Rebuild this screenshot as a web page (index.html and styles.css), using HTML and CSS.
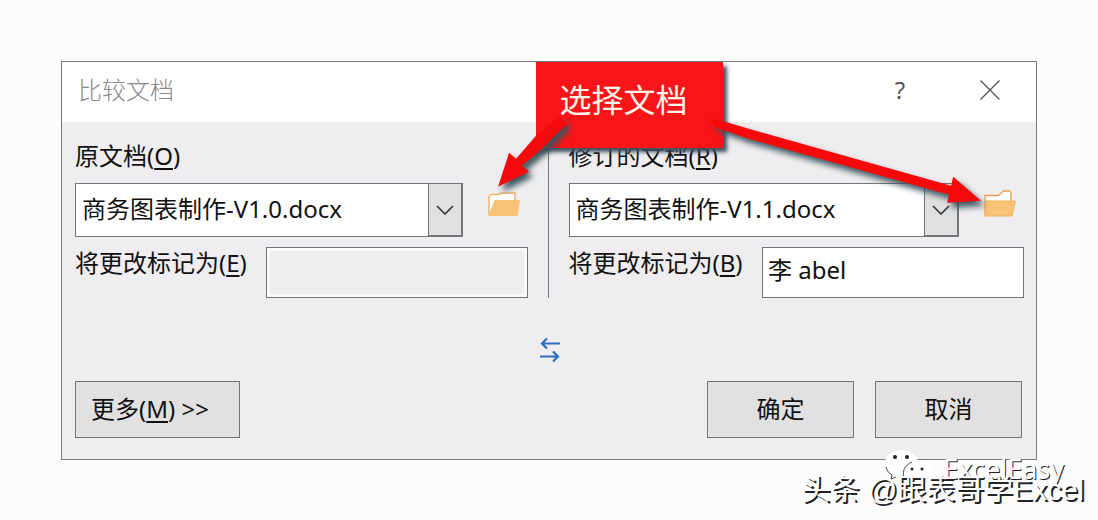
FILE: index.html
```
<!DOCTYPE html>
<html lang="zh-CN">
<head>
    <meta charset="UTF-8">
    <meta name="viewport" content="width=device-width, initial-scale=1.0">
    <title>比较文档</title>
    <link rel="stylesheet" href="styles.css">
</head>
<body>
    <div class="dialog" role="dialog" aria-labelledby="dialog-title">
        <div class="title-bar">
            <h1 class="title" id="dialog-title">比较文档</h1>
            <button type="button" class="title-btn help">?</button>
            <button type="button" class="title-btn" aria-label="关闭">
                <svg width="20" height="20" viewBox="0 0 20 20" fill="none" stroke="#555" stroke-width="1.3">
                    <path d="M0.5 0.5L19.5 19.5M19.5 0.5L0.5 19.5"/>
                </svg>
            </button>
        </div>

        <form class="content">
            <div class="documents">
                <div class="document">
                    <label class="doc-label" for="original">原文档(<u>O</u>)</label>
                    <div class="doc-row">
                        <div class="combo">
                            <select id="original">
                                <option>商务图表制作-V1.0.docx</option>
                            </select>
                            <span class="combo-arrow">
                                <svg width="18" height="10" viewBox="0 0 18 10" fill="none" stroke="#333" stroke-width="1.6">
                                    <path d="M1 1L9 9L17 1"/>
                                </svg>
                            </span>
                        </div>
                        <button type="button" class="folder" aria-label="浏览原文档">
                            <svg width="32" height="28" viewBox="0 0 32 28">
                                <path d="M1 25V6.5L3 4.5H11L13.5 3H27V12" fill="#fff" stroke="#eeb565" stroke-width="1.5"/>
                                <path d="M6.5 10H32L29.5 26H0.5Z" fill="#f8c377"/>
                            </svg>
                        </button>
                    </div>
                    <div class="mark-row">
                        <label for="mark-original">将更改标记为(<u>E</u>)</label>
                        <input type="text" id="mark-original" disabled>
                    </div>
                </div>

                <div class="divider"></div>

                <div class="document">
                    <label class="doc-label" for="revised">修订的文档(<u>R</u>)</label>
                    <div class="doc-row">
                        <div class="combo">
                            <select id="revised">
                                <option>商务图表制作-V1.1.docx</option>
                            </select>
                            <span class="combo-arrow">
                                <svg width="18" height="10" viewBox="0 0 18 10" fill="none" stroke="#333" stroke-width="1.6">
                                    <path d="M1 1L9 9L17 1"/>
                                </svg>
                            </span>
                        </div>
                        <button type="button" class="folder" aria-label="浏览修订的文档">
                            <svg width="32" height="28" viewBox="0 0 32 28">
                                <path d="M1 25V5.5H14.5L19.5 1H25L27 2.5V12" fill="#fff" stroke="#eba050" stroke-width="1.3"/>
                                <path d="M1 11H31.5L28 26H1Z" fill="#f8c377" stroke="#eeb565"/>
                            </svg>
                        </button>
                    </div>
                    <div class="mark-row">
                        <label for="mark-revised">将更改标记为(<u>B</u>)</label>
                        <input type="text" id="mark-revised" value="李 abel">
                    </div>
                </div>
            </div>

            <button type="button" class="swap" aria-label="交换">
                <svg width="20" height="26" viewBox="0 0 20 26" fill="none" stroke="#2b6fc0" stroke-width="2.2">
                    <path d="M20 6.5H2M7 1.5L2 6.5L7 11.5"/>
                    <path d="M0 19.5H18M13 14.5L18 19.5L13 24.5"/>
                </svg>
            </button>

            <div class="actions">
                <button type="button" class="btn more">更多(<u>M</u>) &gt;&gt;</button>
                <button type="submit" class="btn">确定</button>
                <button type="button" class="btn">取消</button>
            </div>
        </form>

        <!-- red note and its two arrows -->
        <div class="callout">选择文档</div>
        <svg class="arrows" viewBox="0 0 976 398" fill="#f5090a">
            <path d="M498 55L506 62L480 88L461 104L468 110L437 125L448 91L455 97L475 74Z"/>
            <path d="M649 57L662 59L688 67L891 124L893 115L921 139L887 141L889 133L688 77L656 66Z"/>
        </svg>
    </div>

    <div class="watermark">
        <div class="account">
            <svg width="50" height="36" viewBox="0 0 50 36">
                <path d="M16 0C7 0 0 6 0 13C0 18 3 22 7 24L5 30L12 26L19 27C18 17 25 11 33 11C31 4 25 0 16 0Z" fill="#fff"/>
                <path d="M33 12C25 12 19 17 19 23C19 30 25 34 33 34L38 33L44 36L43 31C46 29 48 26 48 23C48 17 42 12 33 12Z" fill="#fff"/>
                <path d="M1 17C2 21 4 23 7 25L6 29L11 27M19 27C17 21 20 15 27 12" fill="none" stroke="#444"/>
                <g fill="#222">
                    <circle cx="10" cy="7" r="2"/>
                    <circle cx="22" cy="7" r="2"/>
                    <circle cx="27" cy="19" r="1.5"/>
                    <circle cx="37" cy="19" r="1.5"/>
                </g>
            </svg>
            <span>ExcelEasy</span>
        </div>
        <div class="source">头条 @跟表哥学Excel</div>
    </div>
</body>
</html>
```
FILE: styles.css
```
*{
    box-sizing: border-box;
}
body{
    margin: 0;
    padding: 61px;
    background: #fdfcfd;
    color: #111;
    font-family: "Noto Sans", "Noto Sans CJK SC", sans-serif;
    font-size: 24px;
    line-height: 32px;
}
button, input, select{
    font: inherit;
    color: inherit;
    border-radius: 0;
}
u{
    text-underline-offset: 3px;
    text-decoration-thickness: 2px;
}
.dialog{
    position: relative;
    border: 1px solid #777b80;
    background: #efedef;
}

/* title bar */
.title-bar{
    display: flex;
    align-items: center;
    height: 60px;
    padding: 0 16px 4px;
    background: #fff;
}
.title{
    flex: 1;
    margin: 0;
    font-size: 24px;
    font-weight: 300;
    color: #888;
}
.title-btn{
    display: flex;
    align-items: center;
    justify-content: center;
    width: 60px;
    height: 40px;
    padding: 0;
    border: none;
    background: none;
    color: #555;
}
.help{
    margin-right: 30px;
}

/* form */
.content{
    padding: 18px 12px 21px 13px;
}
.documents{
    display: grid;
    grid-template-columns: 453fr 1px 456fr;
    column-gap: 20px;
}
.divider{
    background: #70757a;
}
.doc-label{
    display: block;
    margin-bottom: 11px;
}
.doc-row{
    display: flex;
    align-items: center;
    gap: 25px;
    padding-right: 8px;
}
.combo{
    position: relative;
    flex: 1;
}
.combo select{
    display: block;
    width: 100%;
    height: 54px;
    padding: 0 40px 2px 6px;
    appearance: none;
    border: 1px solid #70757a;
    background: #fff;
}
.combo-arrow{
    position: absolute;
    top: 0;
    right: 0;
    bottom: 0;
    width: 35px;
    display: flex;
    align-items: center;
    justify-content: center;
    border: 1px solid #70757a;
    border-width: 1px 2px 2px 1px;
    background: #e1e0e1;
    pointer-events: none;
}
.folder, .swap{
    display: block;
    padding: 0;
    border: none;
    background: none;
}
.folder svg, .swap svg{
    display: block;
}
.folder{
    padding-bottom: 12px;
}
.mark-row{
    display: flex;
    justify-content: space-between;
    margin-top: 10px;
}
.mark-row input{
    width: 262px;
    height: 51px;
    padding: 0 5px 8px;
    border: 1px solid #70757a;
    background: #fff;
}
.mark-row input:disabled{
    background: #efedef;
    box-shadow: inset 0 0 0 3px #fbfafb;
}
.swap{
    margin: 39px auto 18px;
}
.actions{
    display: flex;
    gap: 21px;
    padding-right: 2px;
}
.btn{
    width: 147px;
    height: 57px;
    padding: 0 0 2px;
    border: 1px solid #70757a;
    background: #e2e1e2;
}
.more{
    width: 165px;
    margin-right: auto;
    padding-left: 15px;
    text-align: left;
}

/* annotation */
.callout{
    position: absolute;
    top: 0;
    left: 474px;
    width: 187px;
    height: 86px;
    padding-right: 12px;
    background: #f81418;
    box-shadow: 4px 4px 4px #3d525d;
    color: #fff5e8;
    font-size: 32px;
    line-height: 76px;
    text-align: center;
}
.arrows{
    position: absolute;
    top: 0;
    left: 0;
    width: 100%;
    filter: drop-shadow(4px 5px 3px #3d525d);
    pointer-events: none;
}

/* watermark */
.watermark{
    position: absolute;
    right: 14px;
    top: 450px;
    color: #fff;
}
.account{
    display: flex;
    gap: 8px;
    justify-content: flex-end;
    height: 24px;
    padding-right: 20px;
}
.account span{
    font-size: 27px;
    line-height: 38px;
    text-shadow: 1px 1px 0 #222;
}
.source{
    font-family: "Liberation Sans", "Noto Sans CJK SC", sans-serif;
    font-size: 29px;
    text-shadow: 2px 2px 0 #222;
}
```
